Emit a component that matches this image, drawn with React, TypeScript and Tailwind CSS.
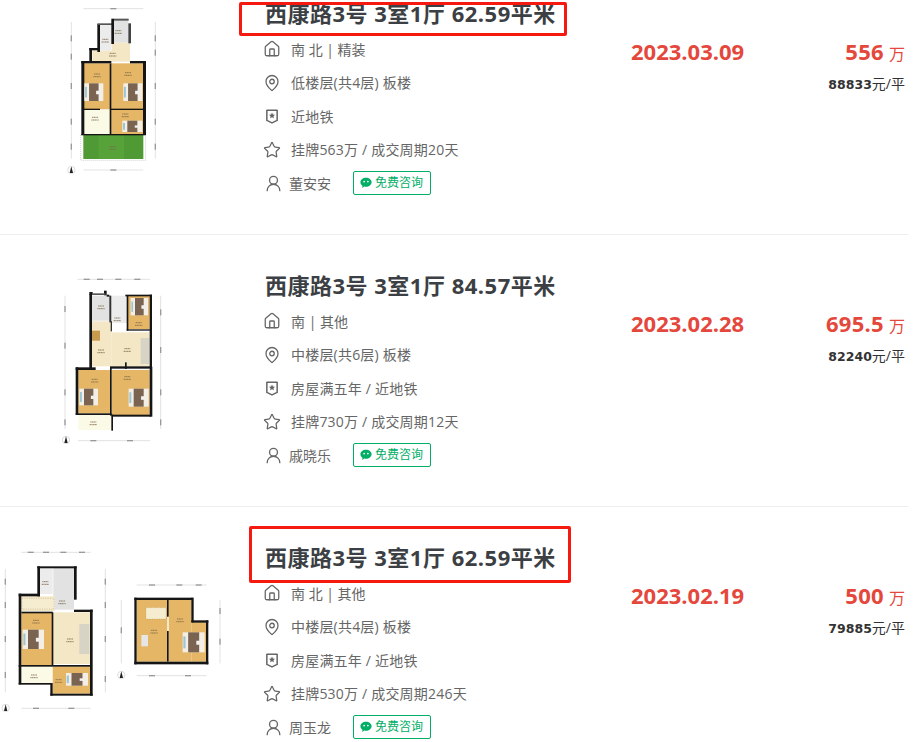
import { House, MapPin, Star, UserRound } from "lucide-react";

const YAHEI = "font-['Open_Sans','Noto_Sans_CJK_SC',sans-serif]";

type R = [number, number, number, number, string];

const WOOD = "#e5b665";
const CREAM = "#f4e7c6";
const PALE = "#fbfae6";
const GRAY = "#e2e2e2";
const WALL = "#151515";

function Bed({ x, y, w, h }: { x: number; y: number; w: number; h: number }) {
  return (
    <g>
      <rect x={x} y={y} width={w} height={h} fill="#f3efe6" />
      <rect x={x + w * 0.25} y={y} width={w * 0.5} height={h} fill="#7a6350" />
      <rect x={x + w * 0.62} y={y + h * 0.42} width={w * 0.16} height={h * 0.2} fill="#f2f2f2" />
      <rect x={x + 2} y={y + h * 0.2} width={w * 0.1} height={h * 0.6} fill="#9cc6d8" />
    </g>
  );
}

function Rooms({ rooms }: { rooms: R[] }) {
  return (
    <>
      {rooms.map(([x, y, w, h, c], i) => (
        <rect key={i} x={x} y={y} width={w} height={h} fill={c} />
      ))}
    </>
  );
}

// tiny room captions, unreadable in the source so just a smudge
function Smudges({ at }: { at: [number, number][] }) {
  return (
    <>
      {at.map(([x, y], i) => (
        <path key={i} d={`M${x - 9} ${y}h18M${x - 11} ${y + 8}h22`} stroke="#7d6a4c" strokeWidth="2.500" strokeDasharray="4 1" />
      ))}
    </>
  );
}

function Compass({ x, y }: { x: number; y: number }) {
  return (
    <g>
      <circle cx={x} cy={y} r="11" fill="none" stroke="#bbb" strokeWidth="1.500" />
      <path d={`M${x} ${y - 11}l5 20h-10z`} fill="#222" />
    </g>
  );
}

function Dim({ d, ticks }: { d: string; ticks: [number, number, boolean][] }) {
  return (
    <>
      <path d={d} fill="none" stroke="#c4c4c4" strokeWidth="1.500" />
      {ticks.map(([x, y, vertical], i) => (
        <rect
          key={i}
          x={vertical ? x - 2 : x - 9}
          y={vertical ? y - 9 : y - 2}
          width={vertical ? 4 : 18}
          height={vertical ? 18 : 4}
          fill="#9a9a9a"
        />
      ))}
    </>
  );
}

function PlanOne() {
  const rooms: R[] = [
    [298, 72, 36, 80, "#ececec"],
    [335, 62, 50, 66, GRAY],
    [277, 152, 113, 33, CREAM],
    [335, 128, 55, 26, CREAM],
    [250, 190, 80, 138, WOOD],
    [333, 190, 97, 138, WOOD],
    [250, 330, 80, 75, PALE],
    [333, 330, 97, 73, WOOD],
    [250, 405, 180, 72, "#4f9a34"],
    [296, 405, 76, 72, "#57a33a"],
  ];
  const walls: R[] = [
    [292, 72, 8, 84, WALL],
    [292, 70, 44, 5, "#555"],
    [334, 56, 8, 76, WALL],
    [342, 56, 44, 6, "#555"],
    [385, 70, 8, 60, "#444"],
    [268, 144, 8, 44, WALL],
    [268, 144, 30, 7, WALL],
    [244, 183, 9, 222, WALL],
    [244, 183, 90, 7, WALL],
    [390, 183, 48, 7, WALL],
    [429, 183, 9, 222, WALL],
    [329, 190, 5, 214, WALL],
    [250, 326, 50, 4, WALL],
    [330, 326, 100, 4, WALL],
    [244, 402, 193, 4, WALL],
  ];
  return (
    <svg viewBox="0 0 720 720" className="block mt-[37px] h-[240px] w-[240px] blur-[0.3px]">
      <Rooms rooms={rooms} />
      <Rooms rooms={walls} />
      <Bed x={253} y={250} w={57} h={53} />
      <Bed x={370} y={250} w={57} h={53} />
      <Bed x={367} y={362} w={60} h={34} />
      <Smudges at={[[291, 222], [384, 218], [285, 352], [376, 342], [338, 160], [338, 440], [355, 92], [316, 118]]} />
      <path d="M242 405v76h195v-76" fill="none" stroke="#bbb" strokeWidth="2" strokeDasharray="3 3" />
      <Dim
        d="M250 26h180M250 510h180M214 66v410M466 66v410"
        ticks={[[340, 26, false], [340, 510, false], [214, 115, true], [214, 170, true], [214, 258, true], [214, 365, true], [214, 440, true], [466, 115, true], [466, 158, true], [466, 258, true], [466, 365, true], [466, 440, true]]}
      />
      <Compass x={214} y={510} />
    </svg>
  );
}

function PlanTwo() {
  const rooms: R[] = [
    [185, 95, 58, 75, GRAY],
    [245, 95, 46, 82, "#ececec"],
    [291, 95, 68, 100, WOOD],
    [185, 172, 60, 135, CREAM],
    [245, 205, 114, 102, CREAM],
    [185, 200, 25, 30, "#c89a50"],
    [145, 318, 95, 130, WOOD],
    [245, 318, 114, 135, WOOD],
    [145, 452, 98, 46, PALE],
    [332, 222, 26, 78, "#d7d3c5"],
  ];
  const walls: R[] = [
    [178, 90, 8, 222, WALL],
    [178, 84, 10, 8, WALL],
    [222, 80, 8, 14, WALL],
    [186, 88, 40, 5, "#555"],
    [230, 92, 8, 6, WALL],
    [238, 95, 6, 80, "#333"],
    [286, 92, 80, 5, WALL],
    [359, 92, 7, 218, WALL],
    [290, 95, 5, 105, WALL],
    [290, 196, 70, 4, WALL],
    [242, 172, 4, 30, "#333"],
    [137, 310, 60, 8, WALL],
    [240, 307, 120, 7, WALL],
    [137, 310, 8, 142, WALL],
    [240, 310, 5, 145, WALL],
    [359, 308, 8, 150, WALL],
    [137, 448, 108, 5, WALL],
    [245, 452, 118, 6, WALL],
    [244, 452, 5, 48, WALL],
    [285, 295, 5, 20, WALL],
  ];
  return (
    <svg viewBox="0 0 450 555" className="block ml-[30px] mt-[29px] h-[185px] w-[150px] blur-[0.3px]">
      <Rooms rooms={rooms} />
      <Rooms rooms={walls} />
      <Bed x={302} y={102} w={52} h={52} />
      <Bed x={148} y={374} w={56} h={50} />
      <Bed x={296} y={374} w={60} h={54} />
      <Smudges at={[[213, 126], [262, 162], [326, 176], [213, 258], [292, 254], [194, 346], [292, 338], [190, 474]]} />
      <Dim
        d="M142 46h218M144 530h216M105 95v400M392 95v400"
        ticks={[[170, 46, false], [210, 46, false], [265, 46, false], [322, 46, false], [190, 530, false], [300, 530, false], [105, 135, true], [105, 245, true], [105, 385, true], [105, 475, true], [392, 145, true], [392, 258, true], [392, 385, true], [392, 475, true]]}
      />
      <Compass x={108} y={528} />
    </svg>
  );
}

function PlanThree() {
  const rooms: R[] = [
    [120, 120, 38, 75, "#ececec"],
    [160, 118, 62, 124, GRAY],
    [64, 202, 100, 44, CREAM],
    [64, 252, 92, 156, WOOD],
    [158, 250, 112, 155, CREAM],
    [64, 412, 92, 50, PALE],
    [158, 412, 112, 82, WOOD],
    [238, 285, 30, 90, "#d7d3c5"],
    [410, 213, 92, 185, WOOD],
    [506, 213, 68, 185, WOOD],
    [574, 280, 44, 118, WOOD],
  ];
  const walls: R[] = [
    [112, 112, 8, 90, WALL],
    [112, 112, 118, 6, WALL],
    [222, 112, 8, 100, WALL],
    [56, 194, 64, 8, WALL],
    [56, 194, 8, 272, WALL],
    [222, 242, 56, 7, WALL],
    [270, 242, 8, 258, WALL],
    [64, 248, 94, 5, WALL],
    [155, 250, 5, 160, WALL],
    [56, 408, 214, 5, WALL],
    [56, 462, 100, 5, WALL],
    [151, 462, 7, 38, WALL],
    [151, 494, 127, 6, WALL],
    [403, 206, 175, 7, WALL],
    [403, 206, 7, 200, WALL],
    [574, 206, 7, 74, WALL],
    [574, 274, 51, 7, WALL],
    [618, 274, 7, 132, WALL],
    [403, 398, 222, 8, WALL],
    [501, 213, 5, 50, WALL],
    [501, 306, 5, 92, WALL],
  ];
  return (
    <svg viewBox="0 0 690 636" className="block mt-[22px] h-[212px] w-[230px] blur-[0.3px]">
      <Rooms rooms={rooms} />
      <Rooms rooms={walls} />
      <Bed x={68} y={302} w={64} h={58} />
      <Bed x={198} y={432} w={66} h={38} />
      <Bed x={548} y={310} w={66} h={60} />
      <rect x={66} y={208} width={96} height={32} fill="#f6ecd0" stroke="#9a8660" strokeDasharray="3 4" />
      <rect x={438} y={236} width={60} height={34} fill="#f6ecd0" stroke="#9a8660" strokeDasharray="3 4" />
      <rect x={424} y={318} width={20} height={34} fill="#e6e6e6" />
      <Smudges at={[[108, 274], [136, 158], [186, 216], [210, 330], [102, 438], [176, 452], [462, 304], [540, 270]]} />
      <Dim
        d="M64 70h208M64 538h208M16 120v370M316 120v370M410 168h210M410 440h210M364 213v190M660 213v190"
        ticks={[[92, 70, false], [138, 70, false], [190, 70, false], [246, 70, false], [108, 538, false], [214, 538, false], [456, 168, false], [538, 168, false], [596, 168, false], [456, 440, false], [564, 440, false], [16, 158, true], [16, 228, true], [16, 330, true], [16, 438, true], [316, 158, true], [316, 228, true], [316, 330, true], [316, 450, true], [364, 304, true], [660, 246, true], [660, 338, true]]}
      />
      <Compass x={17} y={537} />
      <Compass x={364} y={438} />
    </svg>
  );
}

function ShieldStar({ className }: { className?: string }) {
  return (
    <svg viewBox="0 0 14 16" className={className} fill="none">
      <path d="M1.500 1.200h11v11L7 14.800 1.500 12.200z" stroke="#666" strokeWidth="1.600" strokeLinejoin="round" />
      <path d="M7 3.800l1 2.100 2.200.3-1.600 1.500.4 2.200L7 8.800l-2 1.100.4-2.200-1.600-1.500 2.200-.3z" fill="#666" />
    </svg>
  );
}

function WechatIcon() {
  return (
    <svg viewBox="0 0 14 13" className="h-[12px] w-[12px] shrink-0">
      <path d="M7 .5c3.500 0 6.500 2.300 6.500 5.200S10.500 11 7 11c-.7 0-1.400-.1-2-.3L2.500 12.300l.4-2.500C1.300 8.800.5 7.300.5 5.700.5 2.800 3.500.5 7 .5z" fill="#00ae66" />
      <circle cx="4.800" cy="4.800" r="1" fill="#fff" />
      <circle cx="9.200" cy="4.800" r="1" fill="#fff" />
    </svg>
  );
}

function MetaRow({ icon, children }: { icon: React.ReactNode; children: React.ReactNode }) {
  return (
    <div className="flex h-[33.500px] items-center">
      <span className="-ml-[2px] flex w-[28px] shrink-0 items-center">{icon}</span>
      <span className="text-[14px] tracking-[0.2px] text-[#666]">{children}</span>
    </div>
  );
}

type Deal = {
  title: string;
  tags: string;
  floor: string;
  extra: string;
  listing: string;
  agent: string;
  date: string;
  price: string;
  unit: string;
  plan: React.ReactNode;
  mark?: React.ReactNode;
};

const deals: Deal[] = [
  {
    title: "西康路3号 3室1厅 62.59平米",
    tags: "南 北 | 精装",
    floor: "低楼层(共4层) 板楼",
    extra: "近地铁",
    listing: "挂牌563万 / 成交周期20天",
    agent: "董安安",
    date: "2023.03.09",
    price: "556",
    unit: "88833",
    plan: <PlanOne />,
    mark: <div className="absolute left-[239px] top-[39px] h-[34px] w-[328px] rounded-[2px] border-[3px] border-[#f5190f]" />,
  },
  {
    title: "西康路3号 3室1厅 84.57平米",
    tags: "南 | 其他",
    floor: "中楼层(共6层) 板楼",
    extra: "房屋满五年 / 近地铁",
    listing: "挂牌730万 / 成交周期12天",
    agent: "戚晓乐",
    date: "2023.02.28",
    price: "695.5",
    unit: "82240",
    plan: <PlanTwo />,
  },
  {
    title: "西康路3号 3室1厅 62.59平米",
    tags: "南 北 | 其他",
    floor: "中楼层(共4层) 板楼",
    extra: "房屋满五年 / 近地铁",
    listing: "挂牌530万 / 成交周期246天",
    agent: "周玉龙",
    date: "2023.02.19",
    price: "500",
    unit: "79885",
    plan: <PlanThree />,
    mark: <div className="absolute left-[249px] top-[19px] h-[57px] w-[322px] rounded-[2px] border-[3px] border-[#f5190f]" />,
  },
];

function DealRow({ deal }: { deal: Deal }) {
  return (
    <div className="relative flex h-[272px] w-[908px] border-b border-[#eeeeee]">
      <div className="w-[265px] shrink-0">{deal.plan}</div>

      <div className="w-[366px] shrink-0 pt-[37px]">
        <h3 className="text-[22px] leading-[27px] font-bold tracking-[0.5px] text-[#3c3f43]">{deal.title}</h3>
        <div className="mt-[5.500px]">
          <MetaRow icon={<House size={18} strokeWidth={1.7} color="#666" />}>
            <span className="tracking-normal">{deal.tags}</span>
          </MetaRow>
          <MetaRow icon={<MapPin size={18} strokeWidth={1.7} color="#666" />}>{deal.floor}</MetaRow>
          <MetaRow icon={<ShieldStar className="ml-[2px] h-[15px] w-[14px]" />}>{deal.extra}</MetaRow>
          <MetaRow icon={<Star size={18} strokeWidth={1.7} color="#666" />}>{deal.listing}</MetaRow>
          <div className="flex h-[33.500px] items-center">
            <span className="flex w-[24px] shrink-0 items-center">
              <UserRound size={19} strokeWidth={1.7} color="#666" className="-ml-[1px]" />
            </span>
            <span className="w-[64px] text-[14px] text-[#666]">{deal.agent}</span>
            <span className="flex h-[24px] w-[78px] items-center gap-[3px] rounded-[2px] border border-[#00ae66] pl-[6px] text-[12px] text-[#00ae66]">
              <WechatIcon />
              免费咨询
            </span>
          </div>
        </div>
      </div>

      <div className="w-[160px] shrink-0 pt-[73px] text-[22px] leading-[30px] font-bold text-[#e4483c]">{deal.date}</div>

      <div className="w-[114px] shrink-0 pt-[73px] text-right">
        <div className="leading-[30px] text-[#e4483c]">
          <span className="text-[22px] font-bold tracking-[0.3px]">{deal.price}</span>
          <span className="ml-[5px] text-[16px]">万</span>
        </div>
        <div className="mt-[5px] text-[14px] leading-[20px] text-[#333]">
          <span className="font-['DejaVu_Sans',sans-serif] text-[12.500px] font-bold">{deal.unit}</span>
          元/平
        </div>
      </div>

      {deal.mark}
    </div>
  );
}

export default function App() {
  return (
    <div className={`h-[742px] w-[924px] overflow-hidden bg-white ${YAHEI}`}>
      <div className="-mt-[37px]">
        {deals.map((deal) => (
          <DealRow key={deal.date} deal={deal} />
        ))}
      </div>
    </div>
  );
}
